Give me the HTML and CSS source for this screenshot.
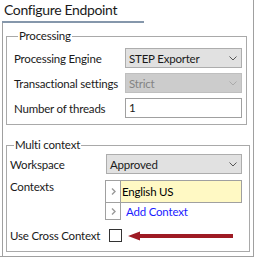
FILE: index.html
```html
<!DOCTYPE html>
<html>
<head>
<meta charset="utf-8">
<link rel="stylesheet" href="styles.css">
</head>
<body>
<div class="frame">
  <div class="title">Configure Endpoint</div>
  <div class="tabline"></div>
  <div class="panel">
    <fieldset class="group g1">
      <legend>Processing</legend>
      <div class="row">
        <span class="lbl w1">Processing Engine</span>
        <div class="select s1"><span>STEP Exporter</span><svg class="chev" width="8" height="5" viewBox="0 0 8 5"><path d="M0.5 0.5 L4 4 L7.5 0.5" fill="none" stroke="#555" stroke-width="1"/></svg></div>
      </div>
      <div class="row">
        <span class="lbl w1">Transactional settings</span>
        <div class="select s1 disabled"><span>Strict</span><svg class="chev" width="8" height="5" viewBox="0 0 8 5"><path d="M0.5 0.5 L4 4 L7.5 0.5" fill="none" stroke="#aaa" stroke-width="1"/></svg></div>
      </div>
      <div class="row">
        <span class="lbl w1">Number of threads</span>
        <div class="input s1">1</div>
      </div>
    </fieldset>
    <fieldset class="group g2">
      <legend>Multi context</legend>
      <div class="row">
        <span class="lbl w2">Workspace</span>
        <div class="select s2"><span>Approved</span><svg class="chev" width="8" height="5" viewBox="0 0 8 5"><path d="M0.5 0.5 L4 4 L7.5 0.5" fill="none" stroke="#555" stroke-width="1"/></svg></div>
      </div>
      <div class="row top">
        <span class="lbl w3">Contexts</span>
        <div class="ctxlist">
          <div class="crow first">
            <div class="cell"><svg width="5" height="7" viewBox="0 0 5 7"><path d="M1 0.5 L4 3.5 L1 6.5" fill="none" stroke="#999" stroke-width="1.4"/></svg></div>
            <div class="cval">English US</div>
          </div>
          <div class="crow second">
            <div class="cell"><svg width="5" height="7" viewBox="0 0 5 7"><path d="M1 0.5 L4 3.5 L1 6.5" fill="none" stroke="#999" stroke-width="1.4"/></svg></div>
            <div class="add">Add Context</div>
          </div>
        </div>
      </div>
      <div class="row cross">
        <span class="lbl w4">Use Cross Context</span>
        <span class="check"></span>
        <svg class="arrow" width="106" height="10" viewBox="0 0 106 10"><path d="M0 5 L12 0.5 L12 3 L105 3 L105 7 L12 7 L12 9.5 Z" fill="#9e1b24"/></svg>
      </div>
    </fieldset>
  </div>
</div>
</body>
</html>
```
FILE: styles.css
```css
* { box-sizing: border-box; }
body {
  margin: 0;
  background: #fff;
  font-family: Lato, "Liberation Sans", sans-serif;
  font-size: 11.5px;
  letter-spacing: -0.2px;
  color: #1a1a1a;
}
.frame {
  width: 254px;
  height: 257px;
  border-right: 1px solid #a0a0a0;
  border-bottom: 1px solid #a0a0a0;
  display: flex;
  flex-direction: column;
}
.title {
  height: 21px;
  padding-left: 4px;
  font-size: 14px;
  letter-spacing: -0.35px;
  line-height: 20px;
  color: #1a1a1a;
}
.tabline {
  margin-left: 2px;
  width: 142px;
  height: 2px;
  background: #8597ab;
}
.panel {
  flex: 1;
  margin-left: 2px;
  border-left: 1px solid #a0a0a0;
  padding: 0 0 0 3px;
}
.group {
  margin: 6px 0 0 0;
  border: 1px solid #a9a9a9;
  min-width: 0;
}
.g1 { width: 241px; padding: 5px 4px 6px 7px; }
.g2 { width: 244px; margin-top: 13px; padding: 2px 7px 8px 3px; }
legend {
  font-size: 11.5px;
  line-height: 14px;
  padding: 0 1px;
  margin-left: 4px;
}
.row {
  display: flex;
  align-items: center;
  height: 20px;
}
.g1 .row + .row { margin-top: 5px; }
.lbl { flex: 0 0 auto; white-space: nowrap; }
.w1 { width: 111px; }
.w2 { width: 96px; }
.w3 { width: 95px; }
.w4 { width: 99px; }
.select {
  height: 20px;
  border: 1px solid #adadad;
  background: #e1e1e1;
  display: flex;
  align-items: center;
  justify-content: space-between;
  padding: 0 4px 0 3px;
}
.s1 { width: 117px; }
.s2 { width: 136px; }
.select.disabled {
  background: #cccccc;
  border-color: #bfbfbf;
  color: #838383;
}
.input {
  height: 20px;
  border: 1px solid #a0a0a0;
  background: #fff;
  padding-left: 3px;
  line-height: 18px;
}
.row.top {
  align-items: flex-start;
  height: auto;
  margin-top: 6px;
}
.row.top .lbl { line-height: 14px; }
.ctxlist { width: 137px; }
.crow { display: flex; }
.crow.first { height: 23px; }
.crow.second { height: 17px; }
.cell {
  width: 16px;
  border: 1px solid #a0a0a0;
  display: flex;
  align-items: center;
  justify-content: center;
  background: #fff;
}
.crow.second .cell { border-top: 0; }
.cval {
  flex: 1;
  background: #fff9c4;
  border: 1px solid #a0a0a0;
  border-left: 0;
  padding-left: 1px;
  line-height: 21px;
  color: #000;
}
.add {
  padding-left: 5px;
  color: #1a1aff;
  line-height: 17px;
}
.row.cross {
  margin-top: 8px;
  height: 15px;
}
.check {
  width: 13px;
  height: 13px;
  border: 1px solid #333;
  background: #fff;
  flex: 0 0 auto;
}
.arrow {
  margin-left: 6px;
  flex: 0 0 auto;
}
```
